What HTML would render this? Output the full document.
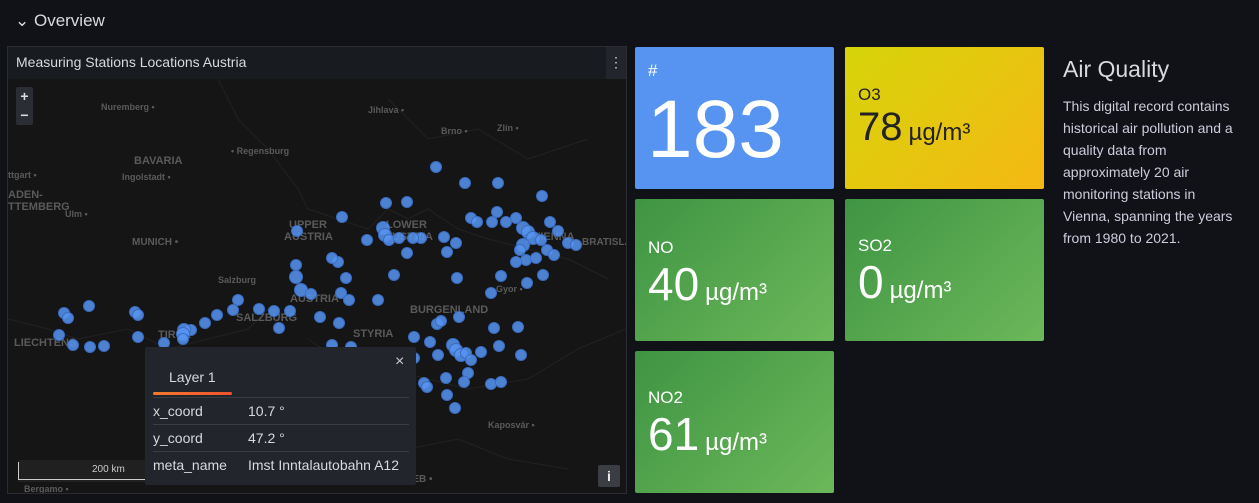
<!DOCTYPE html>
<html><head><meta charset="utf-8"><style>
*{margin:0;padding:0;box-sizing:border-box}
html,body{width:1259px;height:503px;overflow:hidden}
body{background:#111217;font-family:"Liberation Sans",sans-serif;color:#ccccdc;position:relative}
.abs{position:absolute}
.tile{position:absolute;width:199px;height:142px;border-radius:2px;color:#fff}
.lbl{position:absolute;left:13px;font-size:17px}
.val{position:absolute;left:13px;font-size:46px;white-space:nowrap}
.val small{font-size:24px;margin-left:6px}
.green{background:linear-gradient(135deg,#3f9443,#6cb85a)}
.maptxt{font-size:9px;fill:#5a5a5a;font-family:"Liberation Sans",sans-serif;font-weight:bold}
.row{position:absolute;left:8px;width:256px;height:27px;border-top:1px solid #3a3d44;font-size:14px;color:#d8d9de;line-height:27px}
.row span{position:absolute;left:95px}
</style></head><body>
<div class="abs" style="left:15px;top:11px;font-size:17px;color:#d8d9de">&#8964; Overview</div>

<div class="abs" style="left:7px;top:46px;width:620px;height:448px;border:1px solid #2a2c32;background:#181b1f;overflow:hidden">
  <div class="abs" style="left:8px;top:7px;font-size:14px;color:#d8d9de">Measuring Stations Locations Austria</div>
  <div class="abs" style="right:0;top:0;width:20px;height:32px;background:#22252b;color:#ccc;text-align:center;line-height:30px;font-size:14px">&#8942;</div>
  <div class="abs" style="left:0;top:32px;width:618px;height:414px;background:#151515;overflow:hidden">
    <svg width="618" height="414" style="position:absolute;left:0;top:0">
      <g transform="translate(0,-47)">
      <g stroke="#222" fill="none" stroke-width="1">
        <path d="M210 47 L230 87 L260 117 L290 157 L300 177 L330 187 L360 197 L380 177 L400 187 L420 177 L450 197 L480 207 L520 217 L560 227 L600 247"/>
        <path d="M0 287 L40 297 L70 307 L120 297 L160 317 L200 307 L240 297 L260 277 L290 287"/>
        <path d="M300 307 L330 327 L380 337 L420 347 L460 357 L520 347 L570 317 L618 297"/>
        <path d="M350 407 L400 417 L450 407 L500 427 L560 437"/>
        <path d="M380 67 L420 107 L470 97 L520 127 L580 107"/>
      </g>
      <g class="maptxt">
        <text x="93" y="78">Nuremberg •</text><text x="360" y="81">Jihlava •</text><text x="433" y="102">Brno •</text><text x="489" y="99">Zlín •</text>
        <text x="126" y="132" style="font-size:11px">BAVARIA</text><text x="223" y="122">• Regensburg</text><text x="114" y="148">Ingolstadt •</text>
        <text x="0" y="146">ttgart •</text><text x="0" y="166" style="font-size:11px">ADEN-</text><text x="0" y="178" style="font-size:11px">TTEMBERG</text>
        <text x="57" y="185">Ulm •</text><text x="124" y="213" style="font-size:10px">MUNICH •</text>
        <text x="281" y="196" style="font-size:11px">UPPER</text><text x="276" y="208" style="font-size:11px">AUSTRIA</text>
        <text x="378" y="196" style="font-size:11px">LOWER</text><text x="376" y="208" style="font-size:11px">AUSTRIA</text>
        <text x="525" y="208" style="font-size:11px">VIENNA</text><text x="574" y="213" style="font-size:10px">BRATISLAV</text>
        <text x="210" y="251">Salzburg</text><text x="282" y="270" style="font-size:11px">AUSTRIA</text><text x="228" y="289" style="font-size:11px">SALZBURG</text>
        <text x="150" y="306" style="font-size:11px">TIROL</text><text x="6" y="314" style="font-size:11px">LIECHTENS</text>
        <text x="402" y="281" style="font-size:11px">BURGENLAND</text><text x="345" y="305" style="font-size:11px">STYRIA</text>
        <text x="488" y="260">Gyor •</text><text x="361" y="376">Maribor •</text><text x="480" y="396">Kaposvár •</text>
        <text x="343" y="419" style="font-size:11px">VENIA</text><text x="376" y="450" style="font-size:10px">ZAGREB •</text>
        <text x="16" y="460">Bergamo •</text>
      </g>
      <g fill="#5794f2" fill-opacity="0.85" stroke="#3a6cc0" stroke-width="1">
<circle cx="428" cy="135" r="5.5"/><circle cx="457" cy="151" r="5.5"/><circle cx="490" cy="151" r="5.5"/><circle cx="534" cy="164" r="5.5"/><circle cx="489" cy="180" r="5.5"/><circle cx="399" cy="170" r="5.5"/><circle cx="378" cy="171" r="5.5"/><circle cx="334" cy="185" r="5.5"/><circle cx="289" cy="199" r="5.5"/><circle cx="375" cy="196" r="6.5"/><circle cx="377" cy="203" r="6.5"/><circle cx="381" cy="208" r="5.5"/><circle cx="391" cy="206" r="5.5"/><circle cx="359" cy="208" r="5.5"/><circle cx="413" cy="206" r="5.5"/><circle cx="436" cy="205" r="5.5"/><circle cx="463" cy="186" r="5.5"/><circle cx="469" cy="190" r="5.5"/><circle cx="484" cy="190" r="5.5"/><circle cx="498" cy="190" r="5.5"/><circle cx="508" cy="186" r="5.5"/><circle cx="515" cy="196" r="6.5"/><circle cx="520" cy="200" r="6.5"/><circle cx="525" cy="206" r="6.5"/><circle cx="533" cy="208" r="5.5"/><circle cx="542" cy="190" r="5.5"/><circle cx="550" cy="199" r="5.5"/><circle cx="560" cy="211" r="5.5"/><circle cx="568" cy="213" r="5.5"/><circle cx="515" cy="213" r="6.5"/><circle cx="512" cy="218" r="5.5"/><circle cx="518" cy="228" r="5.5"/><circle cx="528" cy="226" r="5.5"/><circle cx="539" cy="218" r="5.5"/><circle cx="546" cy="223" r="5.5"/><circle cx="535" cy="243" r="5.5"/><circle cx="519" cy="251" r="5.5"/><circle cx="508" cy="230" r="5.5"/><circle cx="493" cy="244" r="5.5"/><circle cx="483" cy="261" r="5.5"/><circle cx="449" cy="246" r="5.5"/><circle cx="448" cy="211" r="5.5"/><circle cx="439" cy="220" r="5.5"/><circle cx="405" cy="206" r="5.5"/><circle cx="399" cy="221" r="5.5"/><circle cx="386" cy="243" r="5.5"/><circle cx="338" cy="246" r="5.5"/><circle cx="330" cy="230" r="5.5"/><circle cx="324" cy="226" r="5.5"/><circle cx="288" cy="233" r="5.5"/><circle cx="288" cy="245" r="6.5"/><circle cx="293" cy="258" r="6.5"/><circle cx="303" cy="262" r="5.5"/><circle cx="333" cy="261" r="5.5"/><circle cx="341" cy="268" r="5.5"/><circle cx="370" cy="268" r="5.5"/><circle cx="251" cy="277" r="5.5"/><circle cx="266" cy="279" r="5.5"/><circle cx="282" cy="279" r="5.5"/><circle cx="230" cy="268" r="5.5"/><circle cx="225" cy="278" r="5.5"/><circle cx="209" cy="283" r="5.5"/><circle cx="197" cy="291" r="5.5"/><circle cx="183" cy="298" r="5.5"/><circle cx="176" cy="298" r="6.5"/><circle cx="175" cy="302" r="6.5"/><circle cx="175" cy="307" r="5.5"/><circle cx="156" cy="311" r="5.5"/><circle cx="127" cy="280" r="5.5"/><circle cx="130" cy="283" r="5.5"/><circle cx="130" cy="305" r="5.5"/><circle cx="81" cy="274" r="5.5"/><circle cx="56" cy="281" r="5.5"/><circle cx="60" cy="286" r="5.5"/><circle cx="51" cy="303" r="5.5"/><circle cx="65" cy="313" r="5.5"/><circle cx="82" cy="315" r="5.5"/><circle cx="96" cy="314" r="5.5"/><circle cx="271" cy="296" r="5.5"/><circle cx="312" cy="285" r="5.5"/><circle cx="331" cy="291" r="5.5"/><circle cx="324" cy="313" r="5.5"/><circle cx="343" cy="315" r="5.5"/><circle cx="429" cy="292" r="5.5"/><circle cx="433" cy="289" r="5.5"/><circle cx="451" cy="285" r="5.5"/><circle cx="422" cy="310" r="5.5"/><circle cx="406" cy="305" r="5.5"/><circle cx="486" cy="296" r="5.5"/><circle cx="510" cy="295" r="5.5"/><circle cx="491" cy="314" r="5.5"/><circle cx="513" cy="323" r="5.5"/><circle cx="473" cy="320" r="5.5"/><circle cx="445" cy="313" r="6.5"/><circle cx="448" cy="318" r="6.5"/><circle cx="453" cy="323" r="6.5"/><circle cx="458" cy="321" r="5.5"/><circle cx="463" cy="328" r="5.5"/><circle cx="430" cy="323" r="5.5"/><circle cx="416" cy="351" r="5.5"/><circle cx="438" cy="346" r="5.5"/><circle cx="460" cy="341" r="5.5"/><circle cx="483" cy="352" r="5.5"/><circle cx="456" cy="350" r="5.5"/><circle cx="493" cy="350" r="5.5"/><circle cx="439" cy="363" r="5.5"/><circle cx="419" cy="355" r="5.5"/><circle cx="406" cy="326" r="5.5"/><circle cx="447" cy="376" r="5.5"/>
      </g>
      </g>
    </svg>
    <div class="abs" style="left:8px;top:8px;width:17px;height:38px;background:#2a2d33;border-radius:2px;color:#ddd;font-size:14px;font-weight:bold;text-align:center;line-height:19px">+<br>&minus;</div>
    <div class="abs" style="left:10px;top:381px;width:130px;height:22px;background:rgba(40,40,40,.6)"></div>
    <div class="abs" style="left:10px;top:383px;width:128px;height:18px;border-left:1px solid #ccc;border-bottom:1px solid #ccc"></div>
    <div class="abs" style="left:84px;top:385px;font-size:10px;color:#ccc">200 km</div>
    <div class="abs" style="left:590px;top:386px;width:22px;height:22px;background:#3a3d44;border-radius:2px;color:#eee;text-align:center;font-weight:bold;line-height:22px;font-size:14px">i</div>
  </div>
</div>

<div class="abs" style="left:145px;top:347px;width:271px;height:138px;background:#22252b;border-radius:2px">
  <div class="abs" style="left:250px;top:6px;font-size:16px;color:#ccc">&#215;</div>
  <div class="abs" style="left:24px;top:22px;font-size:14px;color:#d8d9de">Layer 1</div>
  <div class="abs" style="left:8px;top:45px;width:79px;height:3px;background:linear-gradient(90deg,#f57a2e,#f0522e);border-radius:2px"></div>
  <div class="row" style="top:50px">x_coord<span>10.7 °</span></div>
  <div class="row" style="top:77px">y_coord<span>47.2 °</span></div>
  <div class="row" style="top:104px">meta_name<span>Imst Inntalautobahn A12</span></div>
</div>

<div class="tile" style="left:635px;top:47px;background:#5794f2"><div class="lbl" style="top:14px">#</div><div class="abs" style="left:12px;top:36px;font-size:82px">183</div></div>
<div class="tile" style="left:845px;top:47px;background:linear-gradient(135deg,#d6d40a,#f5b814);color:#222"><div class="lbl" style="top:38px">O3</div><div class="val" style="top:58px;font-size:40px">78<small>µg/m³</small></div></div>
<div class="tile green" style="left:635px;top:199px"><div class="lbl" style="top:39px">NO</div><div class="val" style="top:58px">40<small>µg/m³</small></div></div>
<div class="tile green" style="left:845px;top:199px"><div class="lbl" style="top:37px">SO2</div><div class="val" style="top:56px">0<small>µg/m³</small></div></div>
<div class="tile green" style="left:635px;top:351px"><div class="lbl" style="top:37px">NO2</div><div class="val" style="top:56px">61<small>µg/m³</small></div></div>

<div class="abs" style="left:1063px;top:56px;font-size:23px;color:#d8d9de">Air Quality</div>
<div class="abs" style="left:1063px;top:95px;width:196px;overflow:hidden;font-size:14px;line-height:22px;color:#ccccdc;white-space:nowrap">This digital record contains<br>historical air pollution and a<br>quality data from<br>approximately 20 air<br>monitoring stations in<br>Vienna, spanning the years<br>from 1980 to 2021.</div>
</body></html>
